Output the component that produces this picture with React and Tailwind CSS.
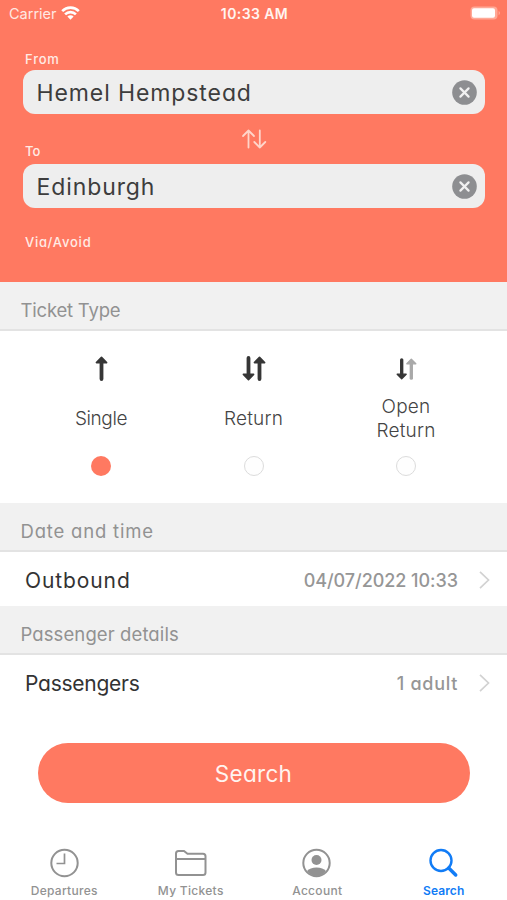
import React from "react";
import clsx from "clsx";

function StatusBar() {
  return (
    <div className="grid h-[28px] grid-cols-3 items-center pl-[9px] pr-[7px] font-['Inter'] text-[14px] leading-none">
      <div className="flex items-center gap-[5px] text-[#ffe8e2] [font-feature-settings:normal]">
        <span className="text-[14.5px]">Carrier</span>
        <svg className="-ml-px -mt-[2px]" width="19" height="14" viewBox="0 0 19 14" fill="none" stroke="#fff" strokeWidth="2.6">
          <path d="M1.2 5.1a11.7 11.7 0 0 1 16.6 0" />
          <path d="M4.1 8.4a7.6 7.6 0 0 1 10.8 0" />
          <path d="M9.5 13.8 6.4 10.6a4.4 4.4 0 0 1 6.2 0z" fill="#fff" stroke="none" />
        </svg>
      </div>
      <span className="whitespace-nowrap text-center font-semibold tracking-[0.4px] text-[#fff4f0]">10:33 AM</span>
      <svg className="-mt-[2px] justify-self-end" width="30" height="14" viewBox="0 0 30 14">
        <rect x=".5" y=".5" width="27" height="13" rx="4" fill="#ffa997" />
        <rect x="2" y="2.2" width="23" height="9.6" rx="2" fill="#fff" />
        <path d="M28.6 5v4.2q1.4-.6 1.4-2.1t-1.4-2.1z" fill="#ffa997" />
      </svg>
    </div>
  );
}

function StationInput({ value }) {
  return (
    <div className="flex h-[44px] items-center justify-between rounded-[12px] bg-[#eeeeee] pl-[13.5px] pr-[8px]">
      <span className="pt-[2px] text-[23px] font-normal tracking-[0.9px] text-[#3d3d3d]">{value}</span>
      <svg width="25" height="25" viewBox="0 0 25 25">
        <circle cx="12.5" cy="12.5" r="12.3" fill="#8d8e91" />
        <path d="m8.4 8.4 8.2 8.2m0-8.2-8.2 8.2" stroke="#f1f1f1" strokeWidth="2.2" strokeLinecap="round" />
      </svg>
    </div>
  );
}

function SwapIcon() {
  return (
    <svg width="26" height="20" viewBox="0 0 26 20" fill="none" stroke="#ffd5ca" strokeWidth="1.8" strokeLinecap="round" strokeLinejoin="round">
      <path d="M7.5 18.5V1.5M2 7l5.5-5.5L13 7" />
      <path d="M18.8 1.5v17M13.3 13l5.5 5.5 5.5-5.5" />
    </svg>
  );
}

function Arrow({ x = 0, down, color = "#363636" }) {
  return (
    <g transform={down ? `translate(${x} 25) scale(1 -1)` : `translate(${x} 0)`}>
      <path d="M6.5 4v19" stroke={color} strokeWidth="3.8" strokeLinecap="round" />
      <path d="M6.5 1.3 11.6 6.6H1.4z" fill={color} stroke={color} strokeWidth="1.6" strokeLinejoin="round" />
    </g>
  );
}

function TicketOption({ label, tracking, selected, children }) {
  return (
    <div className="flex w-[152.5px] flex-col items-center">
      <div className="flex h-[26px] items-center pb-px">{children}</div>
      <div
        className={clsx(
          "flex h-[71px] w-[80px] items-center justify-center pt-[2px] text-center text-[19px] font-light leading-[23.5px] text-[#444]",
          tracking
        )}
      >
        {label}
      </div>
      <span
        className={clsx(
          "mt-[3px] size-[20px] rounded-full",
          selected ? "bg-[#ff7961]" : "border-[1.5px] border-[#dcdcdc] bg-[#fefefe]"
        )}
      />
    </div>
  );
}

function SectionTitle({ tracking, children }) {
  return (
    <h2
      className={clsx(
        "flex h-[49px] items-center border-b-2 border-[#e3e3e3] bg-[#f1f1f1] pl-[20.5px] pt-[10px] text-[18.5px] text-[#929292]",
        tracking
      )}
    >
      {children}
    </h2>
  );
}

function DetailRow({ label, value, labelTracking, valueTracking }) {
  return (
    <div className="flex h-[54px] items-center pl-[25px] pr-[17px]">
      <span className={clsx("pt-[3px] text-[21px] text-[#333]", labelTracking)}>{label}</span>
      <span className={clsx("ml-auto pt-[2px] text-[18px] font-medium text-[#969696]", valueTracking)}>{value}</span>
      <svg className="ml-[21px] mt-px" width="11" height="18" viewBox="0 0 11 18" fill="none" stroke="#d2d2d2" strokeWidth="1.7">
        <path d="m1 .8 8.5 8.2L1 17.2" />
      </svg>
    </div>
  );
}

function Tab({ label, active, children }) {
  return (
    <div className={clsx("flex flex-col items-center", active ? "text-[#117cf6]" : "text-[#929292]")}>
      <svg width="32" height="30" viewBox="0 0 32 30" fill="none" stroke="currentColor" strokeWidth="2">
        {children}
      </svg>
      <span
        className={clsx(
          "mt-[5px] font-['Inter'] text-[12px] leading-[16px] [font-feature-settings:normal]",
          active ? "font-semibold tracking-[0.1px]" : "font-medium tracking-[0.3px]"
        )}
      >
        {label}
      </span>
    </div>
  );
}

export default function App() {
  return (
    <div className="flex h-[900px] w-[507px] flex-col overflow-hidden bg-white font-['Inter',sans-serif] [font-feature-settings:'cv11']">
      <header className="h-[282px] bg-[#ff7961]">
        <StatusBar />
        <div className="pl-[23px] pr-[22px] pt-[23px] text-[13px] font-medium leading-[16px] tracking-[0.8px] text-[#ffebe5]">
          <div className="mb-[3px] pl-[2px]">From</div>
          <StationInput value="Hemel Hempstead" />
          <div className="grid h-[50px] grid-cols-3">
            <span className="self-end pb-[5px] pl-[2px] tracking-normal">To</span>
            <span className="justify-self-center pt-[15px]">
              <SwapIcon />
            </span>
          </div>
          <StationInput value="Edinburgh" />
          <div className="pl-[2px] pt-[26px]">Via/Avoid</div>
        </div>
      </header>

      <SectionTitle tracking="tracking-[-0.2px]">Ticket Type</SectionTitle>
      <div className="flex h-[172px] justify-center pt-[25px]">
        <TicketOption label="Single" tracking="tracking-[-0.4px]" selected>
          <svg width="13" height="25" viewBox="0 0 13 25">
            <Arrow />
          </svg>
        </TicketOption>
        <TicketOption label="Return" tracking="tracking-[0.2px]">
          <svg width="24" height="25" viewBox="0 0 24 25">
            <Arrow down />
            <Arrow x={11} />
          </svg>
        </TicketOption>
        <TicketOption label="Open Return" tracking="tracking-[0.2px]">
          <svg width="21" height="22" viewBox="0 0 24 25">
            <Arrow down />
            <Arrow x={11} color="#a9a9a9" />
          </svg>
        </TicketOption>
      </div>

      <SectionTitle tracking="tracking-[0.8px]">Date and time</SectionTitle>
      <DetailRow
        label="Outbound"
        value="04/07/2022 10:33"
        labelTracking="tracking-[0.9px]"
        valueTracking="tracking-[-0.05px]"
      />
      <SectionTitle tracking="tracking-[0.1px]">Passenger details</SectionTitle>
      <DetailRow
        label="Passengers"
        value="1 adult"
        labelTracking="tracking-[-0.25px]"
        valueTracking="tracking-[0.7px]"
      />

      <button className="mx-auto mt-[34px] h-[60px] w-[432px] rounded-full bg-[#ff7961] pt-[2px] text-[22.5px] tracking-[0.3px] text-[#fff4f0]">
        Search
      </button>

      <nav className="mt-auto grid h-[52px] grid-cols-4 pl-[1px]">
        <Tab label="Departures">
          <circle cx="16.5" cy="15" r="13.2" />
          <path d="M16.5 5.5V15.5H8.5" strokeWidth="1.7" />
        </Tab>
        <Tab label="My Tickets">
          <path d="M1 11V5.5Q1 3 3.5 3H9l3.5 2.8H28Q30.500 5.8 30.500 8.3V24.500Q30.500 27 28 27H3.500Q1 27 1 24.500zM1 11H30.500" />
        </Tab>
        <Tab label="Account">
          <circle cx="15.500" cy="15" r="13.2" />
          <circle cx="15.500" cy="12" r="5" fill="currentColor" stroke="none" />
          <path d="M6 23Q9 19.500 15.500 19.500t9.500 3.500Q21.500 28 15.500 28T6 23z" fill="currentColor" stroke="none" />
        </Tab>
        <Tab label="Search" active>
          <circle cx="13" cy="12.5" r="10.5" strokeWidth="2.4" />
          <path d="m20.700 20 7 7" strokeWidth="3.5" strokeLinecap="round" />
        </Tab>
      </nav>
    </div>
  );
}
